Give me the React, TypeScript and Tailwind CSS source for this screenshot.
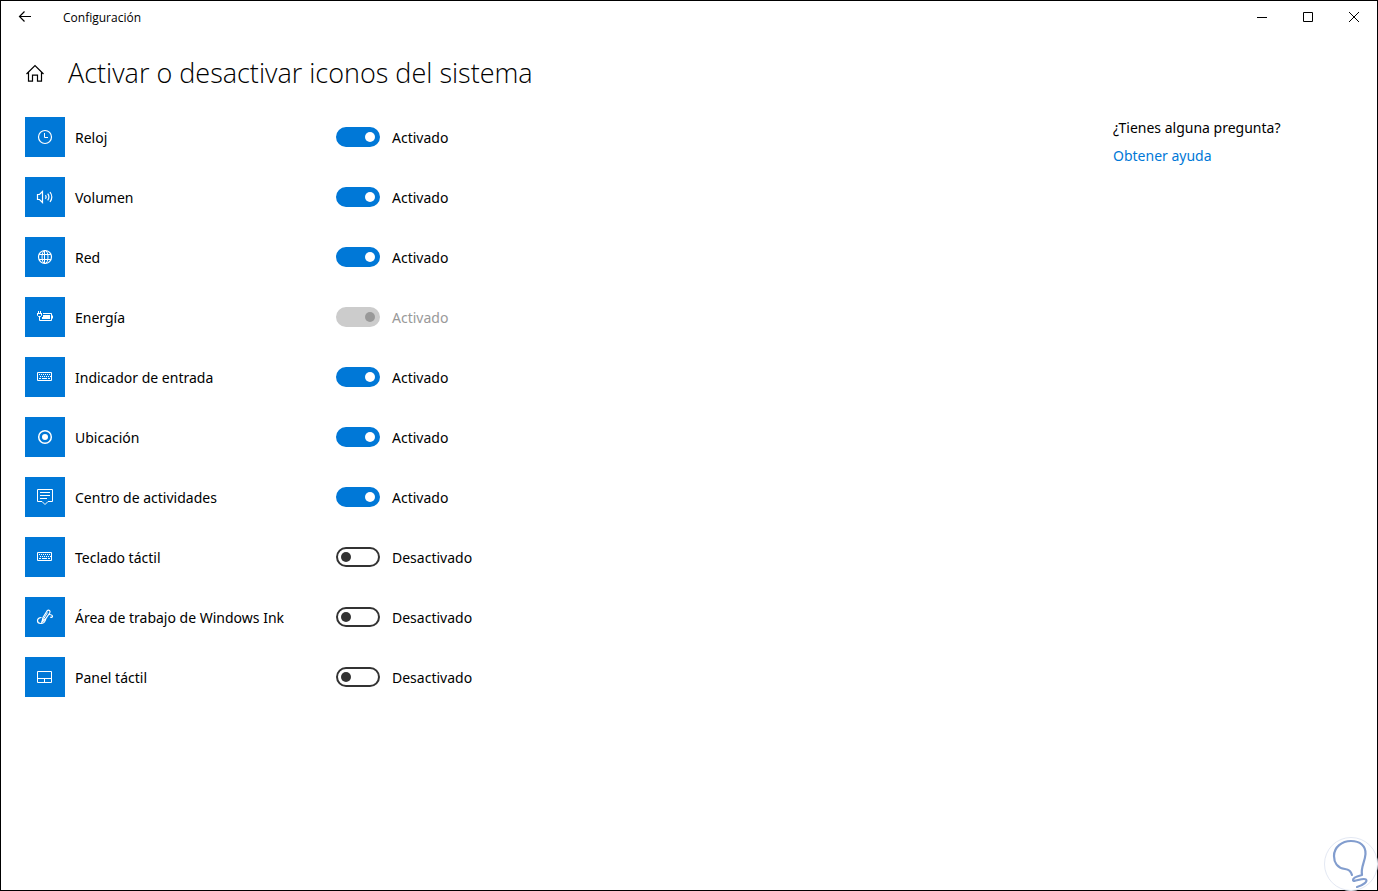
import { useState } from "react";
import type { ReactNode } from "react";

interface SystemIcon {
  id: string;
  name: string;
  icon: ReactNode;
  on: boolean;
  disabled?: boolean;
}

interface GlyphProps {
  children: ReactNode;
}

function Glyph({ children }: GlyphProps) {
  return (
    <svg viewBox="0 0 20 20" className="w-5 h-5" fill="none" stroke="#fff" strokeWidth="1" aria-hidden="true">
      {children}
    </svg>
  );
}

function KeyboardGlyph() {
  return (
    <Glyph>
      <path d="M2.5 5.5h14v8h-14z" />
      <path d="M4 7.5h12M5 9.5h11" strokeDasharray="1 1" />
      <path d="M4 11.5h2M7 11.5h5M13 11.5h2" />
    </Glyph>
  );
}

const systemIcons: SystemIcon[] = [
  {
    id: "clock",
    name: "Reloj",
    on: true,
    icon: (
      <Glyph>
        <circle cx="10" cy="10" r="6.5" strokeWidth="1.2" />
        <path d="M9.5 6v4.5H13" />
      </Glyph>
    ),
  },
  {
    id: "volume",
    name: "Volumen",
    on: true,
    icon: (
      <Glyph>
        <path d="M2.5 7.5h2l3-3v11l-3-3h-2z" strokeWidth="1.2" />
        <path d="M10.5 8.2q1.3 1.8 0 3.6M12.7 6.6q2.4 3.4 0 6.8M15 5q3.6 5 0 10" strokeWidth="1.2" />
      </Glyph>
    ),
  },
  {
    id: "network",
    name: "Red",
    on: true,
    icon: (
      <Glyph>
        <circle cx="10" cy="10" r="6.5" strokeWidth="1.2" />
        <ellipse cx="10" cy="10" rx="3" ry="6.5" />
        <path d="M4 7.5h12M4 12.5h12M9.5 3.5v13" />
      </Glyph>
    ),
  },
  {
    id: "power",
    name: "Energía",
    on: true,
    disabled: true,
    icon: (
      <Glyph>
        <path d="M3.5 4v2M5.5 4v2M2 6.500h5M2.500 6.500v2l1 1h2l1-1v-2M4.500 9.500v4H7" />
        <path d="M8 6.500h8.500v7H7M17.500 8.500v3" />
        <path d="M8 8h7v4H7v-2h1z" fill="#fff" stroke="none" />
      </Glyph>
    ),
  },
  { id: "input", name: "Indicador de entrada", on: true, icon: <KeyboardGlyph /> },
  {
    id: "location",
    name: "Ubicación",
    on: true,
    icon: (
      <Glyph>
        <circle cx="10" cy="10" r="6.3" strokeWidth="1.5" />
        <circle cx="10" cy="10" r="3" fill="#fff" stroke="none" />
      </Glyph>
    ),
  },
  {
    id: "action-center",
    name: "Centro de actividades",
    on: true,
    icon: (
      <Glyph>
        <path d="M2.5 2.5h15v12H13l-3 3-3-3H2.5z" />
        <path d="M5 5.5h10M5 8.5h10M5 11.5h7" />
      </Glyph>
    ),
  },
  { id: "touch-keyboard", name: "Teclado táctil", on: false, icon: <KeyboardGlyph /> },
  {
    id: "ink",
    name: "Área de trabajo de Windows Ink",
    on: false,
    icon: (
      <Glyph>
        <path d="M7 15l1-4.5 4-6.500q1.300-1.500 2.500-.6 1 .8.200 2.600L10.500 12z" strokeWidth="1.2" />
        <path d="M12.500 5.500L6.500 15.500" />
        <path
          d="M6.500 10.500c-2.500 0-4 1.500-4 3.300 0 1.900 1.400 2.700 3.200 2.700 3 0 4.500-1.500 5-4.500M14 7.500c2 0 3.500.8 3.500 2s-2 1.200-2 .2"
          strokeWidth="1.2"
        />
      </Glyph>
    ),
  },
  {
    id: "touchpad",
    name: "Panel táctil",
    on: false,
    icon: (
      <Glyph>
        <path d="M2.5 4.5h14v11h-14zM2.5 11.5h14M9.5 11.5v4" />
      </Glyph>
    ),
  },
];

interface SettingRowProps {
  item: SystemIcon;
  onToggle: () => void;
}

function SettingRow({ item, onToggle }: SettingRowProps) {
  return (
    <li className="flex items-center">
      <div className="flex items-center justify-center shrink-0 w-10 h-10 bg-[#0078d7]">{item.icon}</div>
      <label htmlFor={item.id} className="w-[271px] pl-[10px] pt-[2px]">
        {item.name}
      </label>
      <input
        id={item.id}
        type="checkbox"
        role="switch"
        checked={item.on}
        disabled={item.disabled}
        onChange={onToggle}
        className="appearance-none flex items-center shrink-0 w-11 h-5 px-[3px] rounded-full border-2 border-[#333] before:block before:w-[10px] before:h-[10px] before:rounded-full before:bg-[#333] checked:justify-end checked:border-[#0078d7] checked:bg-[#0078d7] checked:before:bg-white disabled:border-[#ccc] disabled:bg-[#ccc] disabled:before:bg-[#999]"
      />
      <span className={item.disabled ? "pl-3 pt-[2px] text-[#999]" : "pl-3 pt-[2px]"}>
        {item.on ? "Activado" : "Desactivado"}
      </span>
    </li>
  );
}

function TitleBar() {
  return (
    <header className="flex items-center h-8 text-xs">
      <button type="button" aria-label="Atrás" className="flex items-center justify-center w-12 h-8">
        <svg viewBox="0 0 14 14" className="w-[14px] h-[14px]" fill="none" stroke="#000" strokeWidth="1.2" aria-hidden="true">
          <path d="M13 6.5H1.5M6.5 1.5l-5 5 5 5" />
        </svg>
      </button>
      <span className="pl-[14px] pt-[2px] font-['Open_Sans',sans-serif]">Configuración</span>
      <div className="flex ml-auto">
        <button type="button" aria-label="Minimizar" className="flex items-center justify-center w-[46px] h-8">
          <svg viewBox="0 0 10 10" className="w-[10px] h-[10px]" fill="none" stroke="#000" aria-hidden="true">
            <path d="M0 5.5h10" />
          </svg>
        </button>
        <button type="button" aria-label="Maximizar" className="flex items-center justify-center w-[46px] h-8">
          <svg viewBox="0 0 10 10" className="w-[10px] h-[10px]" fill="none" stroke="#000" aria-hidden="true">
            <path d="M.5.5h9v9h-9z" />
          </svg>
        </button>
        <button type="button" aria-label="Cerrar" className="flex items-center justify-center w-[46px] h-8">
          <svg viewBox="0 0 10 10" className="w-[10px] h-[10px]" fill="none" stroke="#000" aria-hidden="true">
            <path d="M0 0l10 10M10 0L0 10" />
          </svg>
        </button>
      </div>
    </header>
  );
}

export default function App() {
  const [items, setItems] = useState(systemIcons);

  const toggle = (id: string) => {
    setItems(items.map((item) => (item.id === id ? { ...item, on: !item.on } : item)));
  };

  return (
    <div className="relative min-h-screen border border-black bg-white text-black text-sm font-['Noto_Sans','Open_Sans',sans-serif]">
      <TitleBar />

      <div className="flex items-center h-20 pl-6">
        <button type="button" aria-label="Inicio">
          <svg viewBox="0 0 20 20" className="w-5 h-5" fill="none" stroke="#000" strokeWidth="1.2" aria-hidden="true">
            <path d="M1.5 11L10 2.5l8.5 8.5M3.5 9.2v9h4v-6h5v6h4v-9" />
          </svg>
        </button>
        <h1 className="pl-[23px] text-[27px] leading-9 font-light font-['Open_Sans',sans-serif]">
          Activar o desactivar iconos del sistema
        </h1>
      </div>

      <main className="flex justify-between pt-1 pl-6">
        <ul className="flex flex-col gap-5">
          {items.map((item) => (
            <SettingRow key={item.id} item={item} onToggle={() => toggle(item.id)} />
          ))}
        </ul>
        <aside className="flex flex-col gap-2 w-[264px] pt-px">
          <p>¿Tienes alguna pregunta?</p>
          <a href="#ayuda" className="text-[#0078d7]">
            Obtener ayuda
          </a>
        </aside>
      </main>

      {/* Light bulb badge in the corner */}
      <svg viewBox="0 0 54 54" className="absolute -right-px -bottom-px w-[54px] h-[54px]" fill="none" aria-hidden="true">
        <circle cx="27" cy="27" r="26.5" fill="#fff" stroke="#e3e8f3" />
        <path
          d="M28 38c-1-4-3-5.500-7-6C13 31 10 25 10 19 10 10 18 4 27 4s15 5 14.500 13c-.5 8-5 13-3.500 21-4 1-9 2-9 5s10-3 13-.5c2 2-3 6-9 7.500"
          stroke="#829dce"
          strokeWidth="2.200"
          strokeLinecap="round"
          strokeLinejoin="round"
        />
      </svg>
    </div>
  );
}
